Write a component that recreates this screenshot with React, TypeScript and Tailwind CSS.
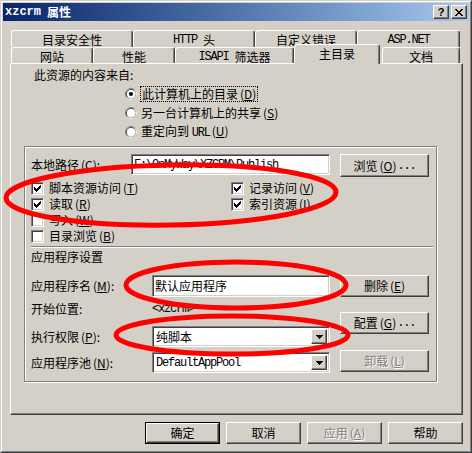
import React from "react";

const CJK = "font-['Noto_Sans_CJK_SC','Noto_Sans',sans-serif]";
const MONO = "font-['Liberation_Mono','DejaVu_Sans_Mono',monospace] text-[12px] tracking-[-1.2px]";
const RAISED =
  "bg-[#D4D0C8] border border-t-white border-l-white border-r-[#404040] border-b-[#404040] shadow-[inset_-1px_-1px_0_#808080]";
const SUNKEN =
  "bg-white border border-t-[#808080] border-l-[#808080] border-r-white border-b-white shadow-[inset_1px_1px_0_#404040,inset_-1px_-1px_0_#D4D0C8]";
const TAB =
  "h-full bg-[#D4D0C8] border-t border-l border-r border-t-white border-l-white border-r-[#404040] shadow-[inset_-1px_0_0_#808080] rounded-t-[3px] flex items-center justify-center pt-[2px] leading-[14px]";

function U({ c }: { c: string }) {
  return <span className="underline underline-offset-[1px]">{c}</span>;
}
function Acc({ c }: { c: string }) {
  return (
    <span className="ml-[2px]">
      (<U c={c} />)
    </span>
  );
}

function Radio({ on }: { on?: boolean }) {
  return (
    <svg width="12" height="12" viewBox="0 0 12 12" className="shrink-0">
      <circle cx="6" cy="6" r="5.5" fill="none" stroke="#808080" />
      <path d="M9.89 2.11 A5.5 5.5 0 0 1 2.11 9.89" fill="none" stroke="#ffffff" />
      <circle cx="6" cy="6" r="4.5" fill="none" stroke="#404040" />
      <path d="M9.18 2.82 A4.5 4.5 0 0 1 2.82 9.18" fill="none" stroke="#D4D0C8" />
      <circle cx="6" cy="6" r="4" fill="#ffffff" />
      {on && <circle cx="6" cy="6" r="2" fill="#000000" />}
    </svg>
  );
}

function Check({ on }: { on?: boolean }) {
  return (
    <div className={`${SUNKEN} w-[13px] h-[13px] shrink-0 relative`}>
      {on && (
        <svg width="7" height="7" viewBox="0 0 7 7" className="absolute left-[2px] top-[2px]" shapeRendering="crispEdges">
          <path
            d="M0 2h1v3H0z M1 3h1v3H1z M2 4h1v3H2z M3 3h1v3H3z M4 2h1v3H4z M5 1h1v3H5z M6 0h1v3H6z"
            fill="#000"
          />
        </svg>
      )}
    </div>
  );
}

function Arrow() {
  return (
    <div className={`${RAISED} w-[16px] h-full flex items-center justify-center`}>
      <svg width="7" height="4" viewBox="0 0 7 4" shapeRendering="crispEdges">
        <path d="M0 0h7v1H0z M1 1h5v1H1z M2 2h3v1H2z M3 3h1v1H3z" fill="#000" />
      </svg>
    </div>
  );
}

export default function App() {
  return (
    <div
      className={`relative w-[472px] h-[453px] overflow-hidden bg-[#D4D0C8] text-[12px] leading-[16px] text-black ${CJK} border border-t-[#D4D0C8] border-l-[#D4D0C8] border-r-[#404040] border-b-[#404040]`}
    >
      <div className="h-full border border-t-white border-l-white border-r-[#808080] border-b-[#808080] p-px flex flex-col">
        {/* Title bar */}
        <div className="h-[18px] shrink-0 bg-linear-to-r from-[#0A246A] to-[#A6CAF0] flex items-center pl-[2px] pr-[2px] text-white font-bold">
          <span className="font-['Liberation_Mono',monospace] text-[12px] leading-[14px]">xzcrm</span>
          <span className="ml-[6px] leading-[14px]">属性</span>
          <div className="ml-auto flex gap-[2px]">
            <div className={`${RAISED} w-[16px] h-[14px] flex items-center justify-center text-black font-['Liberation_Sans',sans-serif] text-[11px] font-bold leading-[10px]`}>
              ?
            </div>
            <div className={`${RAISED} w-[16px] h-[14px] flex items-center justify-center`}>
              <svg width="8" height="7" viewBox="0 0 8 7" shapeRendering="crispEdges">
                <path
                  d="M0 0h2v1H0z M6 0h2v1H6z M1 1h2v1H1z M5 1h2v1H5z M2 2h4v1H2z M3 3h2v1H3z M2 4h4v1H2z M1 5h2v1H1z M5 5h2v1H5z M0 6h2v1H0z M6 6h2v1H6z"
                  fill="#000"
                />
              </svg>
            </div>
          </div>
        </div>

        {/* Tabs + panel */}
        <div className="mt-[9px] pl-[7px]">
          <div className="ml-px flex h-[17px]">
            <div className={`${TAB} w-[122px]`}>目录安全性</div>
            <div className={`${TAB} w-[122px]`}>
              <span className={MONO}>HTTP</span>
              <span className="ml-[6px]">头</span>
            </div>
            <div className={`${TAB} w-[102px]`}>自定义错误</div>
            <div className={`${TAB} w-[103px]`}>
              <span className={MONO}>ASP.NET</span>
            </div>
          </div>
          <div className="ml-px flex h-[16px] items-end">
            <div className={`${TAB} w-[82px]`}>网站</div>
            <div className={`${TAB} w-[82px]`}>性能</div>
            <div className={`${TAB} w-[119px]`}>
              <span className={MONO}>ISAPI</span>
              <span className="ml-[6px]">筛选器</span>
            </div>
            <div className="relative z-10 self-end -mb-px h-[20px] w-[86px] bg-[#D4D0C8] border-t border-l border-r border-t-white border-l-white border-r-[#404040] shadow-[inset_-1px_0_0_#808080] rounded-t-[3px] flex items-center justify-center leading-[14px] pb-[1px]">
              主目录
            </div>
            <div className={`${TAB} ml-[2px] w-[78px]`}>文档</div>
          </div>

          {/* Panel */}
          <div className="w-[453px] h-[352px] border border-t-white border-l-white border-r-[#404040] border-b-[#404040] shadow-[inset_-1px_-1px_0_#808080] flex flex-col">
            <div className="ml-[23px] mt-[3px] h-[16px]">此资源的内容来自:</div>
            <div className="ml-[114px] mt-[3px] flex flex-col gap-[3px]">
              <div className="h-[16px] flex items-center">
                <Radio on />
                <span className="ml-[3px] px-px border border-dotted border-black leading-[14px]">
                  此计算机上的目录<Acc c="D" />
                </span>
              </div>
              <div className="h-[16px] flex items-center">
                <Radio />
                <span className="ml-[4px]">
                  另一台计算机上的共享<Acc c="S" />
                </span>
              </div>
              <div className="h-[16px] flex items-center">
                <Radio />
                <span className="ml-[4px]">
                  重定向到 <span className={MONO}>URL</span>
                  <Acc c="U" />
                </span>
              </div>
            </div>

            {/* Group frame */}
            <div className="ml-[13px] mt-[6px] w-[413px] h-[236px] border border-[#808080] shadow-[inset_1px_1px_0_white,1px_1px_0_white] flex flex-col">
              <div className="mt-[7px] h-[23px] flex items-start">
                <div className="w-[106px] pl-[6px] h-[21px] flex items-center">
                  本地路径<Acc c="C" />:
                </div>
                <div className={`${SUNKEN} w-[199px] h-[21px] flex items-center pl-[2px]`}>
                  <span className={MONO}>F:\OnMyWay\XZCRM\Publish</span>
                </div>
                <div className={`${RAISED} ml-[10px] w-[89px] h-[23px] flex items-center justify-center`}>
                  浏览<Acc c="O" />
                  <span className={`${MONO} ml-px`}>...</span>
                </div>
              </div>

              <div className="mt-[3px] flex">
                <div className="w-[206px] pl-[6px] flex flex-col">
                  <div className="h-[16px] flex items-center">
                    <Check on />
                    <span className="ml-[5px]">
                      脚本资源访问<Acc c="T" />
                    </span>
                  </div>
                  <div className="h-[16px] flex items-center">
                    <Check on />
                    <span className="ml-[5px]">
                      读取<Acc c="R" />
                    </span>
                  </div>
                  <div className="h-[16px] flex items-center">
                    <Check />
                    <span className="ml-[5px]">
                      写入<Acc c="W" />
                    </span>
                  </div>
                  <div className="h-[16px] flex items-center">
                    <Check />
                    <span className="ml-[5px]">
                      目录浏览<Acc c="B" />
                    </span>
                  </div>
                </div>
                <div className="flex flex-col">
                  <div className="h-[16px] flex items-center">
                    <Check on />
                    <span className="ml-[5px]">
                      记录访问<Acc c="V" />
                    </span>
                  </div>
                  <div className="h-[16px] flex items-center">
                    <Check on />
                    <span className="ml-[5px]">
                      索引资源<Acc c="I" />
                    </span>
                  </div>
                </div>
              </div>

              <div className="mt-[2px] ml-[6px] w-[402px] h-[2px] border-t border-t-[#808080] border-b border-b-white" />
              <div className="mt-[1px] pl-[6px] h-[16px]">应用程序设置</div>

              <div className="flex">
                <div className="pl-[6px] flex flex-col">
                  <div className="mt-[10px] h-[22px] flex items-center">
                    <div className="w-[121px]">
                      应用程序名<Acc c="M" />:
                    </div>
                    <div className={`${SUNKEN} w-[178px] h-[22px] flex items-center pl-[2px]`}>默认应用程序</div>
                  </div>
                  <div className="mt-[4px] h-[16px] flex items-center">
                    <div className="w-[121px]">开始位置:</div>
                    <span className={MONO}>&lt;xzcrm&gt;</span>
                  </div>
                  <div className="mt-[9px] h-[21px] flex items-center">
                    <div className="w-[121px]">
                      执行权限<Acc c="P" />:
                    </div>
                    <div className={`${SUNKEN} w-[178px] h-[21px] flex items-stretch p-[2px]`}>
                      <div className="flex-1 flex items-center pl-px">纯脚本</div>
                      <Arrow />
                    </div>
                  </div>
                  <div className="mt-[5px] h-[21px] flex items-center">
                    <div className="w-[121px]">
                      应用程序池<Acc c="N" />:
                    </div>
                    <div className={`${SUNKEN} w-[178px] h-[21px] flex items-stretch p-[2px]`}>
                      <div className="flex-1 flex items-center pl-px">
                        <span className={MONO}>DefaultAppPool</span>
                      </div>
                      <Arrow />
                    </div>
                  </div>
                </div>
                <div className="ml-[10px] flex flex-col">
                  <div className={`${RAISED} mt-[10px] w-[89px] h-[22px] flex items-center justify-center`}>
                    删除<Acc c="E" />
                  </div>
                  <div className={`${RAISED} mt-[15px] w-[89px] h-[22px] flex items-center justify-center`}>
                    配置<Acc c="G" />
                    <span className={`${MONO} ml-px`}>...</span>
                  </div>
                  <div className={`${RAISED} mt-[16px] w-[89px] h-[22px] flex items-center justify-center text-[#808080] [text-shadow:1px_1px_0_#ffffff]`}>
                    卸载<Acc c="L" />
                  </div>
                </div>
              </div>
            </div>
          </div>
        </div>

        {/* Bottom buttons */}
        <div className="mt-[7px] pl-[142px] flex gap-[6px]">
          <div className="w-[75px] h-[22px] border border-black">
            <div className={`${RAISED} w-full h-full flex items-center justify-center`}>确定</div>
          </div>
          <div className={`${RAISED} w-[75px] h-[22px] flex items-center justify-center`}>取消</div>
          <div className={`${RAISED} w-[75px] h-[22px] flex items-center justify-center text-[#808080] [text-shadow:1px_1px_0_#ffffff]`}>
            应用<Acc c="A" />
          </div>
          <div className={`${RAISED} w-[75px] h-[22px] flex items-center justify-center`}>帮助</div>
        </div>
      </div>

      {/* Red annotation ellipses */}
      <svg className="absolute -left-px -top-px pointer-events-none" width="472" height="453" viewBox="0 0 472 453">
        <ellipse cx="171" cy="195" rx="165" ry="30" fill="none" stroke="#FF0000" strokeWidth="5" transform="rotate(-1 171 195)" />
        <ellipse cx="236" cy="285" rx="110" ry="23" fill="none" stroke="#FF0000" strokeWidth="5" />
        <ellipse cx="232" cy="335" rx="116" ry="19" fill="none" stroke="#FF0000" strokeWidth="5" />
      </svg>
    </div>
  );
}
